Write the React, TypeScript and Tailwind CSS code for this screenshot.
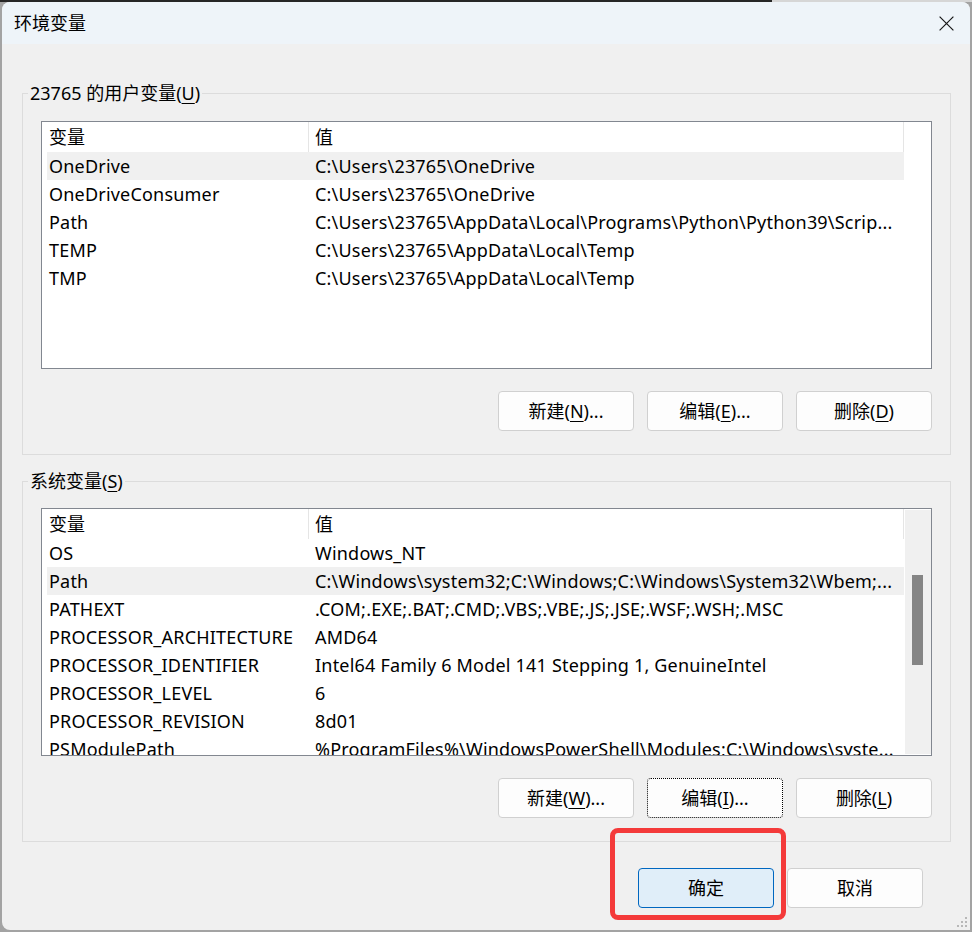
import React from "react";

type Row = [string, string];

const userVars: Row[] = [
  ["OneDrive", "C:\\Users\\23765\\OneDrive"],
  ["OneDriveConsumer", "C:\\Users\\23765\\OneDrive"],
  ["Path", "C:\\Users\\23765\\AppData\\Local\\Programs\\Python\\Python39\\Scrip..."],
  ["TEMP", "C:\\Users\\23765\\AppData\\Local\\Temp"],
  ["TMP", "C:\\Users\\23765\\AppData\\Local\\Temp"],
];

const sysVars: Row[] = [
  ["OS", "Windows_NT"],
  ["Path", "C:\\Windows\\system32;C:\\Windows;C:\\Windows\\System32\\Wbem;..."],
  ["PATHEXT", ".COM;.EXE;.BAT;.CMD;.VBS;.VBE;.JS;.JSE;.WSF;.WSH;.MSC"],
  ["PROCESSOR_ARCHITECTURE", "AMD64"],
  ["PROCESSOR_IDENTIFIER", "Intel64 Family 6 Model 141 Stepping 1, GenuineIntel"],
  ["PROCESSOR_LEVEL", "6"],
  ["PROCESSOR_REVISION", "8d01"],
  ["PSModulePath", "%ProgramFiles%\\WindowsPowerShell\\Modules;C:\\Windows\\syste..."],
];

function Mn({ pre, k, post }: { pre: string; k: string; post: string }) {
  return (
    <span className="whitespace-nowrap">
      {pre}
      <span className="underline underline-offset-[3px] decoration-1">{k}</span>
      {post}
    </span>
  );
}

function Btn({
  children,
  variant = "normal",
}: {
  children: React.ReactNode;
  variant?: "normal" | "focus" | "primary";
}) {
  const cls =
    variant === "primary"
      ? "bg-[#e0eef9] border-[#0067c0]"
      : variant === "focus"
      ? "bg-[#fdfdfd] border-black border-dotted"
      : "bg-[#fdfdfd] border-[#d0d0d0]";
  return (
    <div
      className={`w-[136px] h-[40px] border rounded-[4px] flex items-center justify-center text-[18px] leading-[26px] text-black ${cls}`}
    >
      {children}
    </div>
  );
}

function VarList({
  rows,
  selected,
  scrollbar,
}: {
  rows: Row[];
  selected: number;
  scrollbar?: boolean;
}) {
  return (
    <div className="h-[248px] border border-[#828790] bg-white flex overflow-hidden">
      <div className="w-[862px] pl-[5px] shrink-0">
        <div className="flex h-[30px] text-[18px] leading-[30px]">
          <div className="w-[262px] pl-[2px] border-r border-[#e5e5e5]">变量</div>
          <div className="w-[595px] pl-[6px] border-r border-[#e5e5e5]">值</div>
        </div>
        {rows.map(([name, value], i) => (
          <div
            key={name + i}
            className={`flex h-[28px] text-[18px] leading-[28px] tracking-[0.2px] ${
              i === selected ? "bg-[#f0f0f0]" : ""
            }`}
          >
            <div className="w-[262px] pl-[2px] whitespace-nowrap overflow-hidden">{name}</div>
            <div className="w-[595px] pl-[6px] whitespace-nowrap overflow-hidden">{value}</div>
          </div>
        ))}
      </div>
      {scrollbar ? (
        <div className="ml-[1px] w-[26px] my-[1px] bg-[#f0f0f0] pt-[65px] pl-[7px]">
          <div className="w-[11px] h-[90px] bg-[#858585]" />
        </div>
      ) : null}
    </div>
  );
}

function Group({
  legend,
  padTop,
  height,
  children,
}: {
  legend: React.ReactNode;
  padTop: string;
  height: string;
  children: React.ReactNode;
}) {
  return (
    <div className={`relative border border-[#dcdcdc] px-[18px] ${padTop} ${height}`}>
      <div className="absolute left-[5px] top-[-14px] px-[2px] bg-[#f0f0f0] text-[18px] leading-[26px] text-black">
        {legend}
      </div>
      {children}
    </div>
  );
}

export default function App() {
  return (
    <div className="relative w-[972px] h-[932px] overflow-hidden bg-[#a3a3a3] font-['Noto_Sans','Noto_Sans_CJK_SC',sans-serif] text-black">
      <div className="flex h-[2px]">
        <div className="w-[772px] bg-[#262626]" />
        <div className="flex-1 bg-[#d6d6d6]" />
      </div>
      <div className="relative ml-[2px] w-[968px] h-[928px] bg-[#f0f0f0] rounded-t-[8px] rounded-bl-[8px] overflow-hidden flex flex-col">
        {/* Title bar */}
        <div className="h-[42px] shrink-0 bg-[#eef4f9] flex items-center justify-between pl-[12px] pr-[16px]">
          <span className="text-[18px] leading-[24px] whitespace-nowrap">环境变量</span>
          <svg width="15" height="15" viewBox="0 0 15 15">
            <path d="M0.6 0.6 L14.4 14.4 M14.4 0.6 L0.6 14.4" stroke="#1b1b1b" strokeWidth="1.2" />
          </svg>
        </div>

        <div className="pl-[20px] w-[949px]">
          <div className="mt-[49px]">
            <Group
              legend={<Mn pre="23765 的用户变量(" k="U" post=")" />}
              padTop="pt-[27px]"
              height="h-[362px]"
            >
              <VarList rows={userVars} selected={0} />
              <div className="mt-[22px] flex justify-end gap-[13px]">
                <Btn>
                  <Mn pre="新建(" k="N" post=")..." />
                </Btn>
                <Btn>
                  <Mn pre="编辑(" k="E" post=")..." />
                </Btn>
                <Btn>
                  <Mn pre="删除(" k="D" post=")" />
                </Btn>
              </div>
            </Group>
          </div>

          <div className="mt-[26px]">
            <Group
              legend={<Mn pre="系统变量(" k="S" post=")" />}
              padTop="pt-[26px]"
              height="h-[361px]"
            >
              <VarList rows={sysVars} selected={1} scrollbar />
              <div className="mt-[22px] flex justify-end gap-[13px]">
                <Btn>
                  <Mn pre="新建(" k="W" post=")..." />
                </Btn>
                <Btn variant="focus">
                  <Mn pre="编辑(" k="I" post=")..." />
                </Btn>
                <Btn>
                  <Mn pre="删除(" k="L" post=")" />
                </Btn>
              </div>
            </Group>
          </div>
        </div>

        <div className="mt-[26px] flex justify-end gap-[13px] pr-[47px]">
          <Btn variant="primary">确定</Btn>
          <Btn>取消</Btn>
        </div>

        {/* resize grip */}
        <svg className="absolute right-[2px] bottom-[2px]" width="12" height="12" viewBox="0 0 12 12">
          <rect x="9" y="1" width="2" height="2" fill="#b8b8b8" />
          <rect x="5" y="5" width="2" height="2" fill="#b8b8b8" />
          <rect x="9" y="5" width="2" height="2" fill="#b8b8b8" />
          <rect x="1" y="9" width="2" height="2" fill="#b8b8b8" />
          <rect x="5" y="9" width="2" height="2" fill="#b8b8b8" />
          <rect x="9" y="9" width="2" height="2" fill="#b8b8b8" />
        </svg>
      </div>

      {/* red annotation */}
      <div className="absolute left-[610px] top-[828px] w-[176px] h-[92px] border-[5px] border-[#f43a3a] rounded-[8px]" />
    </div>
  );
}
